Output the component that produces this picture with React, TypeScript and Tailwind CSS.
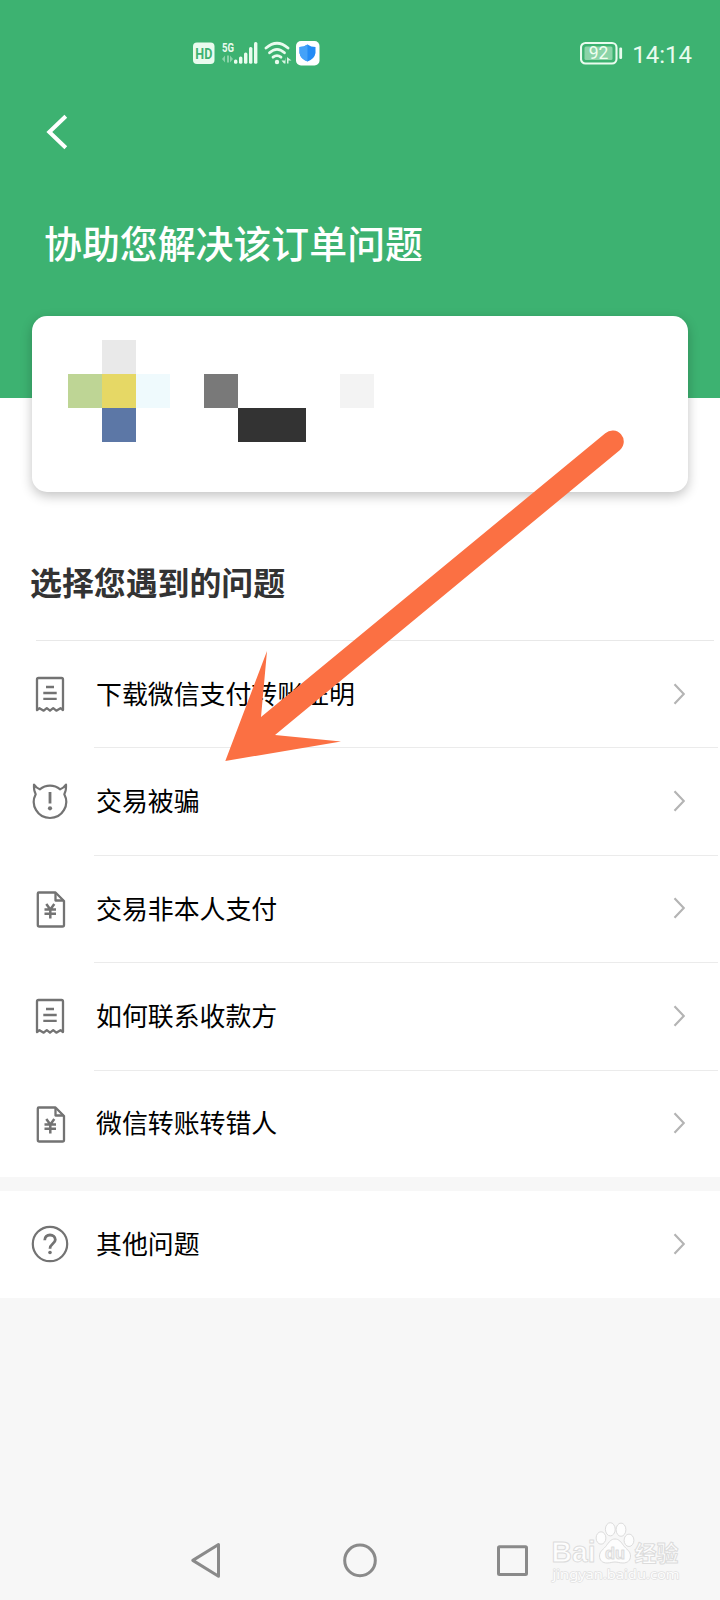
import type { ReactNode } from "react"

const ReceiptIcon = () => (
  <svg viewBox="0 0 40 40" className="w-10 h-10" fill="none" stroke="#737373" strokeWidth="2.300" strokeLinejoin="round">
    <path d="M7 36V5.500Q7 4 8.500 4H31.500Q33 4 33 5.500V36L30.500 34.200L26.300 36.700L23.200 34.200L20 36.700L16.800 34.200L13.700 36.700L9.500 34.200Z" />
    <path d="M16 13H24M13.300 19H26.700M13.300 24.800H26.700" />
  </svg>
)

const DevilIcon = () => (
  <svg viewBox="0 0 40 40" className="w-10 h-10" fill="none" stroke="#737373" strokeWidth="2.200" strokeLinejoin="round">
    <path d="M9.800 8.300Q6.200 7 4 3.700Q3.600 9.500 5.700 13.200A16.200 16.200 0 1 0 34.300 13.200Q36.400 9.500 36 3.700Q33.800 7 30.200 8.300A16.200 16.200 0 0 0 9.800 8.300Z" />
    <path d="M20 11V22.500" strokeWidth="2.800" />
    <circle cx="20" cy="27.300" r="2.100" fill="#737373" stroke="none" />
  </svg>
)

const BillIcon = () => (
  <svg viewBox="0 0 40 40" className="w-10 h-10" fill="none" stroke="#737373" strokeWidth="2.300" strokeLinejoin="round">
    <path d="M8.800 4.500H25.500L34 13V37Q34 38.500 32.500 38.500H9.300Q7.800 38.500 7.800 37V5.500Q7.800 4.500 8.800 4.500Z" />
    <path d="M25.500 5V12.500H33.500" />
    <path d="M16.300 16L20.300 21.500L24.300 16M14.500 21.500H26M14.500 25.700H26M20.300 21.500V30.500" strokeWidth="2.500" />
  </svg>
)

const HelpIcon = () => (
  <svg viewBox="0 0 40 40" className="w-10 h-10" fill="none" stroke="#737373" strokeWidth="2.200">
    <circle cx="20" cy="20" r="17.200" />
    <path d="M14.700 16.200C14.700 12.900 17 11 20 11C23 11 25.300 12.900 25.300 15.800C25.300 19.500 20 19.700 20 24.800" strokeWidth="2.800" />
    <circle cx="20" cy="28.500" r="1.800" fill="#737373" stroke="none" />
  </svg>
)

const problems = [
  { icon: ReceiptIcon, text: "下载微信支付转账证明" },
  { icon: DevilIcon, text: "交易被骗" },
  { icon: BillIcon, text: "交易非本人支付" },
  { icon: ReceiptIcon, text: "如何联系收款方" },
  { icon: BillIcon, text: "微信转账转错人" },
]

// 9 columns x 3 rows, empty string is a blank cell
const mosaic = [
  "", "bg-[#e9e9e9]", "", "", "", "", "", "", "",
  "bg-[#bed595]", "bg-[#e6d865]", "bg-[#effafd]", "", "bg-[#797979]", "", "", "", "bg-[#f3f3f3]",
  "", "bg-[#5c77a6]", "", "", "", "bg-[#333333]", "bg-[#333333]", "", "",
]

function Row({ icon, text, divider }: { icon: ReactNode; text: string; divider: boolean }) {
  return (
    <div className="flex h-[107.4px] pr-[2px]">
      <div className="w-[94px] pl-[30px] flex items-center shrink-0">{icon}</div>
      <div
        className={`flex-1 flex items-center justify-between border-t pl-[2px] pr-[33px] ${
          divider ? "border-[#ebebeb]" : "border-transparent"
        }`}
      >
        <span className="text-[25.900px] leading-none text-black pb-[3px]">{text}</span>
        <svg viewBox="0 0 12 22" className="w-3 h-[22px] mb-px" fill="none" stroke="#b4b4b4" strokeWidth="2.200">
          <path d="M1.500 1.300L10.800 11L1.500 20.700" />
        </svg>
      </div>
    </div>
  )
}

function StatusBar() {
  return (
    <div className="flex items-center h-[106px] pl-[193px] pr-[28px] text-[#e9fbee]">
      <svg viewBox="0 0 127 26" className="w-[127px] h-[26px]" fill="currentColor">
        <rect x="0" y="2.500" width="21.500" height="21.500" rx="4" />
        <text x="10.800" y="18.500" textAnchor="middle" textLength="17" lengthAdjust="spacingAndGlyphs" fontSize="14.500" fontWeight="700" className="font-['Roboto',sans-serif]" fill="#3db271">
          HD
        </text>
        <text x="29" y="11.500" textLength="12" lengthAdjust="spacingAndGlyphs" fontSize="13.500" fontWeight="700" className="font-['Roboto',sans-serif]">
          5G
        </text>
        <g opacity="0.45">
          <path d="M32 15.500V22.500L29 19ZM34 15.500H36V22.500H34ZM37 15.500L40 19L37 22.500Z" />
        </g>
        <rect x="41" y="19.500" width="3.400" height="4.300" rx="1.500" />
        <rect x="46" y="16.500" width="3.400" height="7.300" rx="1.500" />
        <rect x="51" y="12.500" width="3.400" height="11.300" rx="1.500" />
        <rect x="56" y="7" width="3.400" height="16.800" rx="1.500" />
        <rect x="61" y="2" width="3.400" height="21.800" rx="1.500" />
        <g fill="none" stroke="currentColor" strokeWidth="2.800" strokeLinecap="round">
          <path d="M73 8Q84 -1.500 95 8" />
          <path d="M76.500 12.800Q84 6 91.500 12.800" />
          <path d="M80 17.200Q84 14 88 17.200" />
        </g>
        <circle cx="84" cy="22" r="2.200" />
        <path d="M92.500 17V23.500H91L88.500 20.500H92ZM94 17L98.500 20.500H95.500V23.500H94Z" opacity="0.9" />
        <rect x="103" y="1" width="23.500" height="24.500" rx="5" fill="#fff" />
        <path d="M114.500 4.500Q118 7 122.500 7V13Q121.500 19 114.500 21.500Q107.500 19 106.500 13V7Q111 7 114.500 4.500Z" fill="#238bf5" />
        <path d="M114.500 4.500Q111 7 106.500 7V13Q107.500 19 114.500 21.500Z" fill="#45a2f8" />
      </svg>
      <svg viewBox="0 0 43 24" className="w-[43px] h-6 ml-auto mr-[9px]">
        <rect x="1" y="2" width="35.500" height="20.500" rx="4.500" fill="none" stroke="#e9fbee" strokeWidth="2.100" />
        <rect x="4.500" y="5.500" width="28" height="13.500" rx="1.500" fill="#8bd4a8" />
        <rect x="39.300" y="6.500" width="2.800" height="11.500" rx="1.200" fill="#e9fbee" />
        <text x="18.500" y="18.400" textAnchor="middle" fontSize="17.500" className="font-['Roboto',sans-serif]" fill="#effff0">
          92
        </text>
      </svg>
      <span className="font-['Roboto',sans-serif] text-[24px] leading-none mt-[3px]">14:14</span>
    </div>
  )
}

// stamp in the bottom right corner
const Watermark = () => (
  <svg viewBox="0 0 140 70" className="absolute right-[32px] bottom-[10px] w-[140px] h-[70px]" fill="#fdfdfd" stroke="#dcdcdc" strokeWidth="1" strokeLinejoin="round">
    <text x="3.500" y="42.200" textLength="44" lengthAdjust="spacingAndGlyphs" fontSize="29" fontWeight="700" className="font-['Liberation_Sans',sans-serif]">
      Bai
    </text>
    <ellipse cx="53" cy="18" rx="4.900" ry="6.200" />
    <ellipse cx="62.300" cy="9.300" rx="4.900" ry="6.600" />
    <ellipse cx="73" cy="9.700" rx="4.900" ry="6.600" />
    <ellipse cx="81" cy="20.300" rx="4.900" ry="6.200" />
    <path d="M67 19C71 19 73 22 75.500 25.500C78 29 82.500 31 82.500 36C82.500 40.500 79.500 43 75 43C71.500 43 70 42 67 42C64 42 62.500 43 59 43C54.500 43 51.500 40.500 51.500 36C51.500 31 56 29 58.500 25.500C61 22 63 19 67 19Z" />
    <text x="67" y="38.500" textAnchor="middle" textLength="20" lengthAdjust="spacingAndGlyphs" fontSize="17" fontWeight="700" fill="#f4f4f4" className="font-['Liberation_Sans',sans-serif]">
      du
    </text>
    <text x="86.500" y="41" textLength="44" fontSize="22" fontWeight="700" className="font-['Noto_Sans_CJK_SC',sans-serif]">
      经验
    </text>
    <text x="4.500" y="59" textLength="127" lengthAdjust="spacingAndGlyphs" fontSize="13" stroke="#e0e0e0" strokeWidth="1.300" className="font-['Noto_Sans',sans-serif] [paint-order:stroke]">
      jingyan.baidu.com
    </text>
  </svg>
)

export default function App() {
  return (
    <div className="relative w-[720px] h-[1600px] overflow-hidden flex flex-col bg-[#f7f7f7] font-['Noto_Sans_CJK_SC',sans-serif]">
      {/* Header */}
      <header className="h-[398px] shrink-0 bg-[#3db271]">
        <StatusBar />
        <svg viewBox="0 0 24 36" className="w-6 h-9 ml-[46px] mt-[8px]" fill="none" stroke="#fff" strokeWidth="4">
          <path d="M19.800 2.200L3.300 18L19.800 33.800" />
        </svg>
        <h1 className="mt-[71px] ml-[44px] text-[37.900px] leading-[42px] font-medium text-white">协助您解决该订单问题</h1>
      </header>

      <main className="bg-white">
        {/* Order card */}
        <div className="relative -mt-[82px] mx-8 h-[176px] rounded-[15px] bg-white pt-6 pl-9 shadow-[0_4px_12px_rgba(0,0,0,0.24)]">
          <div className="grid grid-cols-[repeat(9,34px)] auto-rows-[34px]">
            {mosaic.map((color, i) => (
              <div key={i} className={color} />
            ))}
          </div>
        </div>

        <h2 className="mt-[68px] ml-[30px] text-[31.900px] leading-[42px] font-bold text-[#333333]">选择您遇到的问题</h2>

        <div className="mt-[38px] ml-9 mr-[6px] h-px bg-[#e8e8e8]" />
        <div className="-mt-px">
          {problems.map((p, i) => (
            <Row key={p.text} icon={<p.icon />} text={p.text} divider={i > 0} />
          ))}
        </div>
      </main>

      <section className="mt-[13.600px] bg-white">
        <Row icon={<HelpIcon />} text="其他问题" divider={false} />
      </section>

      {/* System navigation */}
      <nav className="mt-auto h-[78px] shrink-0 bg-[#f7f7f7] flex justify-center">
        <svg viewBox="0 0 340 76" className="w-[340px] h-[76px]" fill="none" stroke="#8a8a8a" strokeWidth="3" strokeLinejoin="round">
          <path d="M28.500 22.500V54.200L2.800 38.400Z" />
          <circle cx="170" cy="38.400" r="15.300" />
          <rect x="308.500" y="24.700" width="28" height="27.800" rx="1" />
        </svg>
      </nav>

      <Watermark />

      {/* Pointer arrow */}
      <svg viewBox="0 0 720 1600" className="absolute inset-0 w-full h-full pointer-events-none" fill="#fb7043">
        <path d="M225.300 761L267 651L261 717L605.300 433.300A11 11 0 0 1 620 450L275 735L341 741.500Z" />
      </svg>
    </div>
  )
}
